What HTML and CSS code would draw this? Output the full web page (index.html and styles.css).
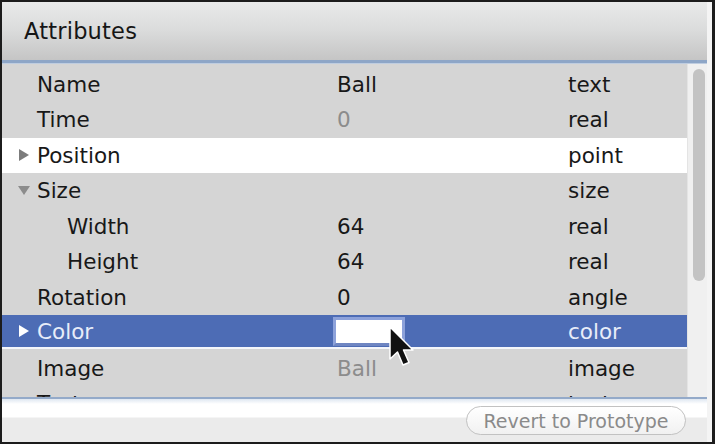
FILE: index.html
```html
<!DOCTYPE html>
<html lang="en">
<head>
  <meta charset="UTF-8">
  <title>Attributes</title>
  <link rel="stylesheet" href="styles.css">
</head>
<body>
  <div class="window">
    <header class="header">
      <h1>Attributes</h1>
    </header>

    <div class="content">
      <div class="list">
        <div class="row">
          <div class="name"><span class="toggle"></span>Name</div>
          <div class="value">Ball</div>
          <div class="type">text</div>
        </div>
        <div class="row">
          <div class="name"><span class="toggle"></span>Time</div>
          <div class="value muted">0</div>
          <div class="type">real</div>
        </div>
        <div class="row hover">
          <div class="name"><span class="toggle closed"></span>Position</div>
          <div class="value"></div>
          <div class="type">point</div>
        </div>
        <div class="row">
          <div class="name"><span class="toggle open"></span>Size</div>
          <div class="value"></div>
          <div class="type">size</div>
        </div>
        <div class="row child">
          <div class="name"><span class="toggle"></span>Width</div>
          <div class="value">64</div>
          <div class="type">real</div>
        </div>
        <div class="row child">
          <div class="name"><span class="toggle"></span>Height</div>
          <div class="value">64</div>
          <div class="type">real</div>
        </div>
        <div class="row">
          <div class="name"><span class="toggle"></span>Rotation</div>
          <div class="value">0</div>
          <div class="type">angle</div>
        </div>
        <div class="row selected">
          <div class="name"><span class="toggle closed"></span>Color</div>
          <div class="value"><span class="swatch"></span></div>
          <div class="type">color</div>
        </div>
        <div class="row">
          <div class="name"><span class="toggle"></span>Image</div>
          <div class="value muted">Ball</div>
          <div class="type">image</div>
        </div>
        <div class="row partial">
          <div class="name"><span class="toggle"></span>Text</div>
          <div class="value"></div>
          <div class="type">text</div>
        </div>
      </div>
      <div class="scroller">
        <div class="thumb"></div>
      </div>
    </div>

    <footer class="footer">
      <button class="revert">Revert to Prototype</button>
    </footer>

    <svg class="cursor" width="30" height="44" viewBox="0 0 30 44">
      <path d="M2 2 L2 34 L9.5 27 L15 40 L21 37.5 L15.5 25 L25 25 Z" fill="#111" stroke="#fff" stroke-width="1.5" stroke-linejoin="round"/>
    </svg>
  </div>
</body>
</html>
```

FILE: styles.css
```css
html, body {
  margin: 0;
  padding: 0;
  background: #1c1c1c;
}
body {
  font-family: 'DejaVu Sans', 'Liberation Sans', sans-serif;
  color: #181818;
  height: 444px;
  overflow: hidden;
}
.window {
  position: relative;
  margin: 2px 3px 0 2px;
  height: 440px;
  background: #f4f4f4;
  display: flex;
  flex-direction: column;
}
.header {
  height: 58px;
  margin-right: 5px;
  background: linear-gradient(to bottom, #e9eaea, #dcdddd 45%, #c5c5c5);
  border-bottom: 3px solid #8ea6c7;
  box-shadow: 0 1px 0 #bfcde0;
  display: flex;
  align-items: center;
}
.header h1 {
  margin: 0 0 0 22px;
  font-size: 22.5px;
  font-weight: normal;
  color: #161616;
  letter-spacing: 0.2px;
}
.content {
  display: flex;
  height: 333px;
  margin-top: 1px;
  margin-right: 5px;
  border-bottom: 2px solid #94aac9;
}
.list {
  flex: 1;
  background: #d5d5d5;
  padding-top: 2.5px;
  overflow: hidden;
  font-size: 21.5px;
}
.row {
  display: grid;
  grid-template-columns: 335px 231px 1fr;
  height: 35.5px;
  line-height: 35.5px;
  white-space: nowrap;
}
.row.partial {
  height: 11px;
  overflow: hidden;
}
.row.hover {
  background: #ffffff;
}
.row.selected {
  background: linear-gradient(to bottom, #4d6cb5 0, #4d6cb5 32px, #f4f6fb 32px, #f4f6fb 34px, #d5d5d5 34px);
  color: #e8edf9;
}
.row.selected > div {
  line-height: 34px;
}
.name {
  display: flex;
  padding-left: 15px;
}
.row.child .name {
  padding-left: 45px;
}
.toggle {
  width: 20px;
  flex: none;
  position: relative;
}
.toggle.closed::before {
  content: "";
  position: absolute;
  left: 2px;
  top: 11px;
  border-left: 10px solid #7c7c7c;
  border-top: 6.5px solid transparent;
  border-bottom: 6.5px solid transparent;
}
.toggle.open::before {
  content: "";
  position: absolute;
  left: 1px;
  top: 13px;
  border-top: 9px solid #8c8c8c;
  border-left: 6.5px solid transparent;
  border-right: 6.5px solid transparent;
}
.row.selected .toggle.closed::before {
  border-left-color: #ffffff;
  top: 10px;
}
.muted {
  color: #8c8c8c;
}
.swatch {
  display: inline-block;
  vertical-align: top;
  margin: 2px 0 0 -4px;
  width: 66px;
  height: 23px;
  background: #ffffff;
  border: 3px solid #8da2da;
  border-bottom-color: #6f86c2;
}
.scroller {
  width: 20px;
  background: #f0f0f0;
  border-left: 1px solid #e4e4e4;
  padding: 5px 2px 0 5px;
  box-sizing: border-box;
}
.thumb {
  height: 212px;
  border-radius: 6px;
  background: #c3c3c3;
}
.footer {
  flex: 1;
  margin-right: 5px;
  background: linear-gradient(to bottom, #dfe7f1 0, #ffffff 5px, #ffffff 18px, #ebebeb 19px);
  display: flex;
  justify-content: flex-end;
  align-items: flex-start;
  padding: 7px 21px 0 0;
}
.revert {
  font-family: 'DejaVu Sans', 'Liberation Sans', sans-serif;
  font-size: 19px;
  color: #8a8a8a;
  height: 29px;
  width: 220px;
  padding: 0;
  line-height: 26px;
  border: 1px solid #c2c2c2;
  border-radius: 15px;
  background: linear-gradient(to bottom, #ffffff, #f1f1f1);
}
.cursor {
  position: absolute;
  left: 386px;
  top: 323px;
}
```
